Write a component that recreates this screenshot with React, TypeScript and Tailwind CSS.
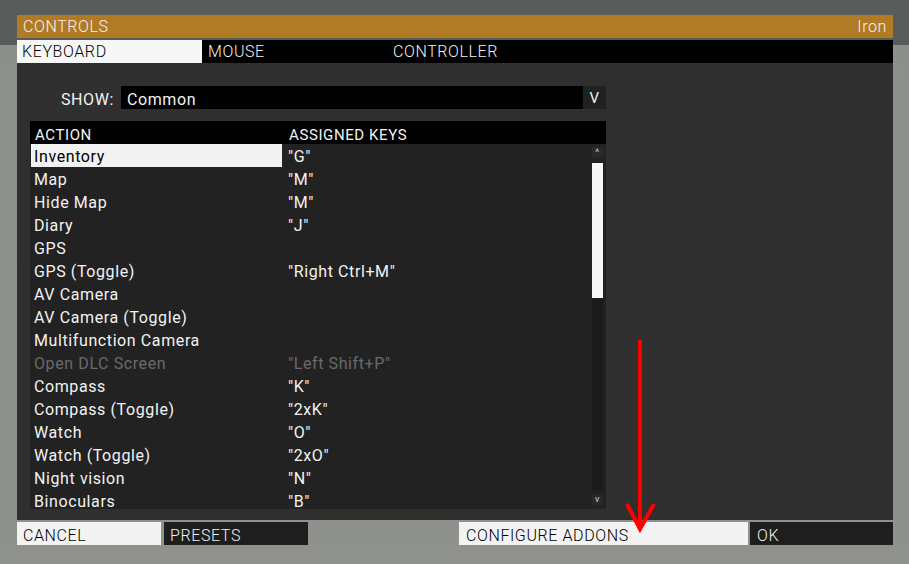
const rows = [
  { action: 'Inventory', keys: '"G"', selected: true },
  { action: 'Map', keys: '"M"' },
  { action: 'Hide Map', keys: '"M"' },
  { action: 'Diary', keys: '"J"' },
  { action: 'GPS', keys: '' },
  { action: 'GPS (Toggle)', keys: '"Right Ctrl+M"' },
  { action: 'AV Camera', keys: '' },
  { action: 'AV Camera (Toggle)', keys: '' },
  { action: 'Multifunction Camera', keys: '' },
  { action: 'Open DLC Screen', keys: '"Left Shift+P"', disabled: true },
  { action: 'Compass', keys: '"K"' },
  { action: 'Compass (Toggle)', keys: '"2xK"' },
  { action: 'Watch', keys: '"O"' },
  { action: 'Watch (Toggle)', keys: '"2xO"' },
  { action: 'Night vision', keys: '"N"' },
  { action: 'Binoculars', keys: '"B"' },
];

export default function App() {
  return (
    <div className="relative w-[909px] h-[564px] overflow-hidden bg-[linear-gradient(to_bottom,#585c5a_0px,#585c5a_45px,#8d8f8b_45px,#8f918d_100%)] font-['Roboto',sans-serif] text-[16px] tracking-[0.6px] text-[#f2f2f2]">
      <div className="ml-[17px] pt-[15px] w-[876px]">
        {/* title */}
        <div className="h-[23px] bg-[#b07b24] flex items-center justify-between px-[6px] pt-[1px] font-light">
          <span>CONTROLS</span>
          <span>Iron</span>
        </div>

        {/* tabs */}
        <div className="mt-[2px] h-[23px] bg-black flex items-center font-light">
          <div className="w-[185px] h-full bg-[#f7f7f7] text-black pl-[5px] pt-[1px] flex items-center">KEYBOARD</div>
          <div className="w-[185px] pl-[6px]">MOUSE</div>
          <div className="pl-[6px]">CONTROLLER</div>
        </div>

        {/* body */}
        <div className="h-[457px] bg-[#2f2f2f] pt-[23px] pl-[13px]">
          <div className="flex h-[23px] items-center">
            <div className="w-[91px] h-full text-right pr-[7px] pt-[4px] flex items-center justify-end">SHOW:</div>
            <div className="w-[462px] h-full bg-black flex items-center pl-[6px] pt-[4px]">Common</div>
            <div className="w-[23px] h-full bg-[#202121] flex items-center justify-center text-[15px] pt-[2px]">V</div>
          </div>

          <div className="mt-[12px] w-[576px]">
            <div className="h-[23px] bg-black flex items-center text-[15px] pt-[5px]">
              <div className="w-[258px] pl-[5px]">ACTION</div>
              <div className="pl-[1px]">ASSIGNED KEYS</div>
            </div>
            <div className="h-[365px] bg-[#222222] flex overflow-hidden">
              <div className="w-[562px]">
                {rows.map((r) => (
                  <div
                    key={r.action}
                    className={`h-[23px] flex items-center ${r.disabled ? 'text-[#6a6a6a]' : ''}`}
                  >
                    <div
                      className={`ml-[1px] w-[251px] h-full flex items-center pl-[3px] pt-[2px] ${r.selected ? 'bg-[#f2f2f2] text-black' : ''}`}
                    >
                      {r.action}
                    </div>
                    <div className="pl-[6px] pt-[2px]">{r.keys}</div>
                  </div>
                ))}
              </div>
              <div className="w-[11px] flex flex-col pt-[3px] pb-[4px]">
                <div className="h-[10px] bg-[#2a2a2a] text-[9px] leading-[10px] text-center text-[#cfcfcf]">^</div>
                <div className="flex-1 mt-[6px] bg-[#1a1a1a] mb-[5px]">
                  <div className="h-[135px] bg-[#f7f7f7]" />
                </div>
                <div className="h-[10px] bg-[#2a2a2a] text-[9px] leading-[8px] text-center text-[#cfcfcf]">v</div>
              </div>
            </div>
          </div>
        </div>

        {/* bottom buttons */}
        <div className="mt-[2px] h-[23px] flex font-light">
          <div className="w-[144px] bg-[#f3f3f3] text-black pl-[6px] pt-[4px] flex items-center">CANCEL</div>
          <div className="ml-[3px] w-[144px] bg-[#1e1e1e] pl-[6px] pt-[4px] flex items-center">PRESETS</div>
          <div className="ml-[151px] w-[289px] bg-[#f3f3f3] text-black pl-[7px] pt-[4px] flex items-center">CONFIGURE ADDONS</div>
          <div className="ml-[2px] w-[143px] bg-[#1e1e1e] pl-[7px] pt-[4px] flex items-center">OK</div>
        </div>
      </div>

      {/* red annotation arrow */}
      <svg className="absolute left-0 top-0 pointer-events-none" width="909" height="564">
        <line x1="640" y1="340" x2="640" y2="526" stroke="#ff0000" strokeWidth="4" />
        <polyline points="627,504 640,529 654,504" fill="none" stroke="#ff0000" strokeWidth="4" />
      </svg>
    </div>
  );
}
